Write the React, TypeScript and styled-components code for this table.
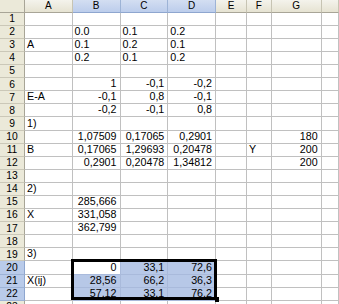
import React from "react";
import styled, { createGlobalStyle } from "styled-components";

const Global = createGlobalStyle`
  html, body { margin: 0; padding: 0; background: #fff; overflow: hidden; }
  #root { width: 339px; height: 304px; overflow: hidden; }
`;

const COLS = ["A", "B", "C", "D", "E", "F", "G", ""];
const SELECTED_COLS = ["B", "C", "D"];
const SELECTED_ROWS = [20, 21, 22];

type RowData = Partial<Record<string, string>>;
const DATA: Record<number, RowData> = {
  2: { B: "0.0", C: "0.1", D: "0.2" },
  3: { A: "A", B: "0.1", C: "0.2", D: "0.1" },
  4: { B: "0.2", C: "0.1", D: "0.2" },
  6: { B: "1", C: "-0,1", D: "-0,2" },
  7: { A: "E-A", B: "-0,1", C: "0,8", D: "-0,1" },
  8: { B: "-0,2", C: "-0,1", D: "0,8" },
  9: { A: "1)" },
  10: { B: "1,07509", C: "0,17065", D: "0,2901", G: "180" },
  11: { A: "B", B: "0,17065", C: "1,29693", D: "0,20478", F: "Y", G: "200" },
  12: { B: "0,2901", C: "0,20478", D: "1,34812", G: "200" },
  14: { A: "2)" },
  15: { B: "285,666" },
  16: { A: "X", B: "331,058" },
  17: { B: "362,799" },
  19: { A: "3)" },
  20: { B: "0", C: "33,1", D: "72,6" },
  21: { A: "X(ij)", B: "28,56", C: "66,2", D: "36,3" },
  22: { B: "57,12", C: "33,1", D: "76,2" },
};

const Sheet = styled.div`
  position: relative;
  display: grid;
  grid-template-columns: 25px 47.5px 48px 47.8px 47.7px 31px 24.7px 50px 1fr;
  grid-template-rows: 12.7px repeat(23, 13.1px);
  width: 339px;
  height: 304px;
  overflow: hidden;
  font-family: "Liberation Sans", Arial, sans-serif;
  font-size: 10.7px;
  color: #000;
  background: #fff;
`;

const Corner = styled.div`
  box-sizing: border-box;
  background: #ebe9d9;
  border-right: 1px solid #a8a597;
  border-bottom: 1px solid #a8a597;
`;

const ColHeader = styled.div<{ $selected: boolean }>`
  box-sizing: border-box;
  display: flex;
  align-items: center;
  justify-content: center;
  font-size: 10px;
  line-height: 1;
  padding-top: 1px;
  background: ${(p) =>
    p.$selected
      ? "linear-gradient(#d3def2, #bccdec)"
      : "linear-gradient(#f4f3ec, #e6e3d2)"};
  border-right: 1px solid ${(p) => (p.$selected ? "#9db3d6" : "#c7c4b3")};
  border-bottom: 1px solid ${(p) => (p.$selected ? "#8ea6cf" : "#a8a597")};
`;

const RowHeader = styled.div<{ $selected: boolean }>`
  box-sizing: border-box;
  display: flex;
  align-items: center;
  justify-content: center;
  font-size: 10.3px;
  line-height: 1;
  padding-top: 1px;
  background: ${(p) => (p.$selected ? "#b9cbea" : "#ebe9d9")};
  border-right: 1px solid ${(p) => (p.$selected ? "#8ea6cf" : "#a8a597")};
  border-bottom: 1px solid ${(p) => (p.$selected ? "#9db3d6" : "#cbc8b8")};
`;

const Cell = styled.div<{ $right: boolean; $selected: boolean; $active: boolean }>`
  box-sizing: border-box;
  display: flex;
  align-items: flex-end;
  justify-content: ${(p) => (p.$right ? "flex-end" : "flex-start")};
  padding: 0 ${(p) => (p.$right ? "3px" : "0")} 1px ${(p) => (p.$right ? "0" : "2px")};
  line-height: 12px;
  white-space: nowrap;
  overflow: visible;
  background: ${(p) => (p.$selected && !p.$active ? "#b7c8e7" : "#fff")};
  border-right: 1px solid ${(p) => (p.$selected ? "#a9badb" : "#c0c0c0")};
  border-bottom: 1px solid ${(p) => (p.$selected ? "#a9badb" : "#c0c0c0")};
`;

const SelectionFrame = styled.div`
  position: absolute;
  left: 71px;
  top: 259.3px;
  width: 145.7px;
  height: 40.7px;
  box-sizing: border-box;
  border: 3px solid #000;
  pointer-events: none;
`;

const FillHandle = styled.div`
  position: absolute;
  left: 214.5px;
  top: 297px;
  width: 4.5px;
  height: 4.5px;
  background: #000;
  pointer-events: none;
`;

const isNumber = (v: string) => /^-?\d+(,\d+)?$/.test(v);

export default function App() {
  const rows = Array.from({ length: 23 }, (_, i) => i + 1);
  return (
    <>
      <Global />
      <Sheet>
        <Corner />
        {COLS.map((c, i) => (
          <ColHeader key={"h" + i} $selected={SELECTED_COLS.includes(c)}>
            {c}
          </ColHeader>
        ))}
        {rows.map((r) => (
          <React.Fragment key={r}>
            <RowHeader $selected={SELECTED_ROWS.includes(r)}>{r}</RowHeader>
            {COLS.map((c, i) => {
              const v = (c && DATA[r]?.[c]) || "";
              const sel = SELECTED_ROWS.includes(r) && SELECTED_COLS.includes(c);
              return (
                <Cell
                  key={r + "-" + i}
                  $right={isNumber(v)}
                  $selected={sel}
                  $active={r === 20 && c === "B"}
                >
                  {v}
                </Cell>
              );
            })}
          </React.Fragment>
        ))}
        <SelectionFrame />
        <FillHandle />
      </Sheet>
    </>
  );
}
